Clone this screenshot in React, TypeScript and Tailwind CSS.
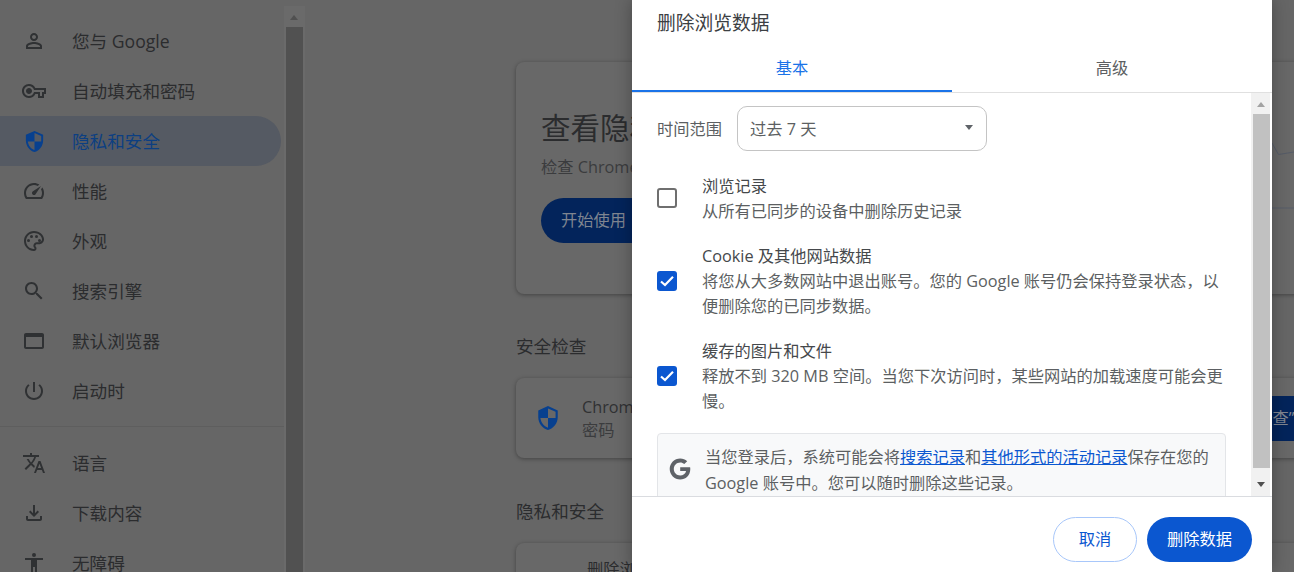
import type { ReactNode } from 'react'

const font = 'font-["Open_Sans","Noto_Sans_CJK_SC",sans-serif]'

const IconPerson = () => (
  <svg viewBox="0 0 24 24" className="h-6 w-6 fill-[#2f3133]">
    <path d="M12 12c2.200 0 4-1.800 4-4s-1.800-4-4-4-4 1.800-4 4 1.800 4 4 4zm0-6c1.100 0 2 .9 2 2s-.9 2-2 2-2-.9-2-2 .9-2 2-2zm0 7c-2.700 0-8 1.300-8 4v3h16v-3c0-2.700-5.300-4-8-4zm6 5H6v-1c.2-.7 3.300-2 6-2s5.800 1.300 6 2v1z" />
  </svg>
)
const IconKey = () => (
  <svg viewBox="0 0 24 24" className="h-6 w-6 fill-[#2f3133]">
    <path d="M22 19h-6v-4h-2.680c-1.140 2.420-3.600 4-6.320 4-3.860 0-7-3.140-7-7s3.140-7 7-7c2.720 0 5.170 1.580 6.320 4H24v6h-2v4zm-4-2h2v-4h2v-2H11.980l-.23-.67C11.050 8.340 9.150 7 7 7c-2.760 0-5 2.240-5 5s2.240 5 5 5c2.150 0 4.050-1.340 4.750-3.330l.23-.67H18v4zM7 15c-1.650 0-3-1.350-3-3s1.350-3 3-3 3 1.350 3 3-1.350 3-3 3z" />
  </svg>
)
const IconShield = ({ cls }: { cls: string }) => (
  <svg viewBox="0 0 24 24" className={cls}>
    <path
      fillRule="evenodd"
      transform="matrix(-1 0 0 1 24 0)"
      d="M12 1 3 5v6c0 5.550 3.840 10.740 9 12 5.160-1.260 9-6.450 9-12V5l-9-4zm0 10.990h7c-.53 4.120-3.280 7.790-7 8.940V12H5V6.300l7-3.110v8.800z"
      fill="#07408f"
    />
  </svg>
)
const IconGauge = () => (
  <svg viewBox="0 0 24 24" className="h-6 w-6 fill-[#2f3133]">
    <path d="M20.400 8.600 19 10.300c.6 1.100 1 2.400 1 3.700 0 1.500-.4 2.900-1.100 4H5.100C4.400 16.900 4 15.500 4 14c0-4.400 3.600-8 8-8 1.300 0 2.600.3 3.700 1l1.700-1.400C15.800 4.600 14 4 12 4 6.500 4 2 8.500 2 14c0 2.200.7 4.200 1.900 5.900.2.100.5.100.9.100h14.400c.4 0 .7 0 .9-.1C21.300 18.200 22 16.200 22 14c0-2-.6-3.900-1.600-5.400zM10.600 15.400c.8.800 2 .8 2.800 0L19 7l-8.400 5.600c-.8.800-.8 2 0 2.800z" />
  </svg>
)
const IconPalette = () => (
  <svg viewBox="0 0 24 24" className="h-6 w-6 fill-[#2f3133]">
    <path d="M12 2C6.500 2 2 6.500 2 12s4.500 10 10 10c1.400 0 2.500-1.100 2.500-2.500 0-.6-.2-1.200-.7-1.700-.3-.3-.4-.6-.4-1 0-.8.700-1.500 1.500-1.500H17c2.800 0 5-2.200 5-5 0-4.400-4.500-8.300-10-8.300zm5 11.300h-2.100c-1.900 0-3.500 1.600-3.500 3.500 0 .9.300 1.700 1 2.300.1.100.1.300.1.400 0 .3-.2.500-.5.500-4.400 0-8-3.600-8-8s3.600-8 8-8 8 3 8 6.300c0 1.600-1.300 3-3 3z" />
    <circle cx="6.500" cy="11.500" r="1.500" />
    <circle cx="9.500" cy="7.500" r="1.500" />
    <circle cx="14.500" cy="7.500" r="1.500" />
    <circle cx="17.500" cy="11.500" r="1.500" />
  </svg>
)
const IconSearch = () => (
  <svg viewBox="0 0 24 24" className="h-6 w-6 fill-[#2f3133]">
    <path d="M15.500 14h-.8l-.3-.3c1-1.100 1.600-2.600 1.600-4.200C16 5.900 13.100 3 9.500 3S3 5.900 3 9.500 5.900 16 9.500 16c1.600 0 3.100-.6 4.200-1.600l.3.3v.8l5 5 1.500-1.500-5-5zm-6 0C7 14 5 12 5 9.500S7 5 9.500 5 14 7 14 9.500 12 14 9.500 14z" />
  </svg>
)
const IconBrowser = () => (
  <svg viewBox="0 0 24 24" className="h-6 w-6 fill-[#2f3133]">
    <path d="M20 4H4c-1.100 0-2 .9-2 2v12c0 1.100.9 2 2 2h16c1.100 0 2-.9 2-2V6c0-1.100-.9-2-2-2zm0 14H4V8h16v10z" />
  </svg>
)
const IconPower = () => (
  <svg viewBox="0 0 24 24" className="h-6 w-6 fill-[#2f3133]">
    <path d="M13 3h-2v10h2V3zm4.800 2.200-1.400 1.400C18 7.800 19 9.800 19 12c0 3.900-3.100 7-7 7s-7-3.100-7-7c0-2.200 1-4.200 2.600-5.400L6.200 5.200C4.200 6.900 3 9.300 3 12c0 5 4 9 9 9s9-4 9-9c0-2.700-1.200-5.100-3.200-6.800z" />
  </svg>
)
const IconTranslate = () => (
  <svg viewBox="0 0 24 24" className="h-6 w-6 fill-[#2f3133]">
    <path d="m12.900 15.100-2.600-2.500c1.800-2 3-4.200 3.700-6.600H17V4h-7V2H8v2H1v2h11.200c-.7 1.900-1.700 3.800-3.200 5.400-.9-1-1.700-2.200-2.300-3.400h-2c.7 1.600 1.700 3.200 3 4.600l-5.100 5L4 19l5-5 3.100 3.100.8-2zM18.500 10h-2L12 22h2l1.100-3h4.800l1.100 3h2l-4.500-12zm-2.600 7 1.600-4.300 1.600 4.300h-3.200z" />
  </svg>
)
const IconDownload = () => (
  <svg viewBox="0 0 24 24" className="h-6 w-6 fill-[#2f3133]">
    <path d="M18 15v3H6v-3H4v3c0 1.100.9 2 2 2h12c1.100 0 2-.9 2-2v-3h-2zm-1-4-1.400-1.400-2.600 2.600V4h-2v8.200L8.400 9.600 7 11l5 5 5-5z" />
  </svg>
)
const IconAccess = () => (
  <svg viewBox="0 0 24 24" className="h-6 w-6 fill-[#2f3133]">
    <path d="M12 2a2 2 0 1 1 0 4 2 2 0 0 1 0-4zm9 7h-6v13h-2v-6h-2v6H9V9H3V7h18v2z" />
  </svg>
)
const IconG = () => (
  <svg viewBox="0 0 24 24" className="h-6 w-6 fill-[#5f6368]">
    <path d="M22.500 10.300H12.200v3.700h5.900c-.6 2.900-3 4.500-5.900 4.500-3.600 0-6.400-2.900-6.400-6.500s2.800-6.500 6.400-6.500c1.600 0 3 .6 4.100 1.500l2.900-2.800C17.300 2.500 14.900 1.500 12.200 1.500 6.400 1.500 1.700 6.200 1.700 12s4.700 10.500 10.500 10.500c5.300 0 10.100-3.800 10.100-10.500 0-.6-.1-1.100-.2-1.700z" />
  </svg>
)

const navTop: [ReactNode, string, boolean?][] = [
  [<IconPerson />, '您与 Google'],
  [<IconKey />, '自动填充和密码'],
  [<IconShield cls="h-[23px] w-[23px]" />, '隐私和安全', true],
  [<IconGauge />, '性能'],
  [<IconPalette />, '外观'],
  [<IconSearch />, '搜索引擎'],
  [<IconBrowser />, '默认浏览器'],
  [<IconPower />, '启动时'],
]
const navBottom: [ReactNode, string][] = [
  [<IconTranslate />, '语言'],
  [<IconDownload />, '下载内容'],
  [<IconAccess />, '无障碍'],
]

const NavItem = ({ icon, label, active }: { icon: ReactNode; label: string; active?: boolean }) => (
  <div
    className={`flex h-[50px] w-[281px] shrink-0 items-center gap-[26px] rounded-r-[25px] pl-[22px] text-[17.6px] ${
      active ? 'bg-[#555a63] text-[#0c3f82]' : 'text-[#2b2c2e]'
    }`}
  >
    <span className="flex h-6 w-6 items-center justify-center">{icon}</span>
    <span>{label}</span>
  </div>
)

const Check = ({ checked }: { checked?: boolean }) =>
  checked ? (
    <span className="mb-[3px] flex h-5 w-5 items-center justify-center rounded-[3px] bg-[#0b57d0]">
      <svg viewBox="0 0 20 20" className="h-5 w-5">
        <path d="M4 10.500 8 14l8-8.200" fill="none" stroke="#fff" strokeWidth="2.200" />
      </svg>
    </span>
  ) : (
    <span className="mb-[4px] h-5 w-5 rounded-[3px] border-2 border-[#6f6f6f] bg-white" />
  )

const Row = ({ checked, title, desc }: { checked?: boolean; title: string; desc: string }) => (
  <div className="flex items-center">
    <span className="flex w-[45px] shrink-0">
      <Check checked={checked} />
    </span>
    <div className="-mt-[1px] mb-[1px] w-[524px] text-[16.25px] leading-[25px] text-[#5c5f62]">
      <div className="text-[#45484b]">{title}</div>
      <div>{desc}</div>
    </div>
  </div>
)

export default function App() {
  return (
    <div className={`${font} relative flex h-[572px] w-[1294px] overflow-hidden bg-[#666666]`}>
      <aside className="relative flex h-full w-[305px] shrink-0 flex-col overflow-hidden pt-[16px]">
        {navTop.map(([icon, label, active]) => (
          <NavItem key={label} icon={icon} label={label} active={active} />
        ))}
        <div className="mb-[11px] mt-[10px] h-px w-[284px] shrink-0 bg-[#5e5e5e]" />
        {navBottom.map(([icon, label]) => (
          <NavItem key={label} icon={icon} label={label} />
        ))}
        <div className="absolute bottom-0 right-0 top-[6px] flex w-[21px] flex-col bg-[#6a6a6a]">
          <div className="ml-[6px] mt-[9px] h-0 w-0 border-x-[4px] border-b-[5px] border-x-transparent border-b-[#505050]" />
          <div className="ml-[2px] mt-[7px] w-[17px] flex-1 bg-[#515151]" />
        </div>
      </aside>

      <main className="flex-1 pl-[211px] pt-[62px] text-[#2b2c2e]">
        <section className="relative h-[232px] w-[830px] rounded-[8px] bg-[#686868] pl-[25px] pt-[46px] shadow-[0_1px_4px_rgba(0,0,0,0.35)]">
          <h1 className="text-[29.5px] leading-[40px]">查看隐私设置</h1>
          <p className="mt-[7px] text-[16.25px] leading-[24px] text-[#3b3c3e]">检查 Chrome 中的重要隐私设置</p>
          <button className="mt-[19px] h-[45px] w-[130px] rounded-full bg-[#03245b] pl-[20px] text-left text-[16.25px] text-[#7f8590]">
            开始使用
          </button>
          <svg viewBox="0 0 60 80" className="absolute left-[750px] top-[75px] h-20 w-[60px]" fill="none" stroke="#565c68" strokeWidth="1">
            <path d="M6 6 12.500 17.500 28 15" />
            <path d="M0 71h60" />
          </svg>
        </section>
        <h2 className="mt-[39px] text-[17.6px] leading-[26px]">安全检查</h2>
        <section className="mt-[19px] flex h-[80px] w-[830px] items-center rounded-[8px] bg-[#686868] pl-[19px] pr-[31px] shadow-[0_1px_4px_rgba(0,0,0,0.35)]">
          <IconShield cls="h-[26px] w-[26px]" />
          <div className="ml-[21px] text-[16.25px] leading-[25px] text-[#303133]">
            <div className="-mb-[2px] pt-[2px]">Chrome</div>
            <div className="text-[#3b3c3e]">密码</div>
          </div>
          <button className="ml-auto h-[45px] w-[150px] rounded-full bg-[#03245b] text-[16.25px] text-[#7f8590]">
            前往“安全检查”
          </button>
        </section>
        <h2 className="mt-[40px] text-[17.6px] leading-[26px]">隐私和安全</h2>
        <section className="mt-[19px] h-[80px] w-[830px] rounded-[8px] bg-[#686868] pl-[71px] pt-[14px] text-[16.25px] leading-[24px] shadow-[0_1px_4px_rgba(0,0,0,0.35)]">
          删除浏览数据
        </section>
      </main>

      {/* 对话框 */}
      <div className="absolute left-[632px] top-0 flex h-[572px] w-[640px] flex-col bg-white shadow-[0_0_16px_rgba(0,0,0,0.3)]">
        <div className="h-[46px] shrink-0 px-[25px] pt-[10px] text-[18.75px] leading-[26px] text-[#3c4043]">删除浏览数据</div>
        <div className="flex h-[47px] shrink-0 border-b border-[#e0e0e0] text-[16.25px]">
          <div className="h-[46px] w-[320px] border-b-2 border-[#1a73e8] text-center leading-[44px] text-[#1a73e8]">基本</div>
          <div className="flex-1 text-center leading-[44px] text-[#5c5f62]">高级</div>
        </div>

        <div className="relative flex-1 overflow-hidden pl-[25px] pt-[13px]">
          <div className="flex items-center text-[16.25px] text-[#5c5f62]">
            <span className="w-[80px] pt-[2px]">时间范围</span>
            <div className="flex h-[45px] w-[250px] items-center justify-between rounded-[10px] border border-[#c4c4c4] pl-[12px] pr-[13px]">
              <span className="pt-[2px]">过去 7 天</span>
              <span className="mb-[2px] h-0 w-0 border-x-[4.5px] border-t-[5px] border-x-transparent border-t-[#5f6368]" />
            </div>
          </div>
          <div className="mt-[24px] flex flex-col gap-[20px]">
            <Row title="浏览记录" desc="从所有已同步的设备中删除历史记录" />
            <Row
              checked
              title="Cookie 及其他网站数据"
              desc="将您从大多数网站中退出账号。您的 Google 账号仍会保持登录状态，以便删除您的已同步数据。"
            />
            <Row
              checked
              title="缓存的图片和文件"
              desc="释放不到 320 MB 空间。当您下次访问时，某些网站的加载速度可能会更慢。"
            />
          </div>
          <div className="mt-[18px] flex h-[80px] w-[569px] items-start rounded-[4px] border border-[#e3e5e8] bg-[#f8f9fa] pl-[10px] pt-[10px]">
            <span className="mt-[13px] shrink-0"><IconG /></span>
            <p className="ml-[13px] w-[515px] text-[16.25px] leading-[26px] text-[#5c5f62]">
              当您登录后，系统可能会将<a className="text-[#0b57d0] underline">搜索记录</a>和<a className="text-[#0b57d0] underline">其他形式的活动记录</a>保存在您的 Google 账号中。您可以随时删除这些记录。
            </p>
          </div>
          <div className="absolute bottom-0 right-[2px] top-0 flex w-[19px] flex-col bg-[#f1f1f1]">
            <div className="ml-[6px] mt-[9px] h-0 w-0 border-x-[4.5px] border-b-[5px] border-x-transparent border-b-[#a3a3a3]" />
            <div className="ml-[2px] mt-[7px] h-[354px] w-[17px] bg-[#c1c1c1]" />
            <div className="ml-[6px] mt-[14px] h-0 w-0 border-x-[4.5px] border-t-[5px] border-x-transparent border-t-[#505050]" />
          </div>
        </div>

        <div className="flex h-[76px] shrink-0 items-start justify-end gap-[10px] border-t border-[#dadce0] pr-[20px] pt-[20px] text-[16.25px]">
          <button className="h-[45px] w-[84px] rounded-full border border-[#a8c7fa] text-[#0b57d0]">取消</button>
          <button className="h-[45px] w-[105px] rounded-full bg-[#0b57d0] text-white">删除数据</button>
        </div>
      </div>
    </div>
  )
}
